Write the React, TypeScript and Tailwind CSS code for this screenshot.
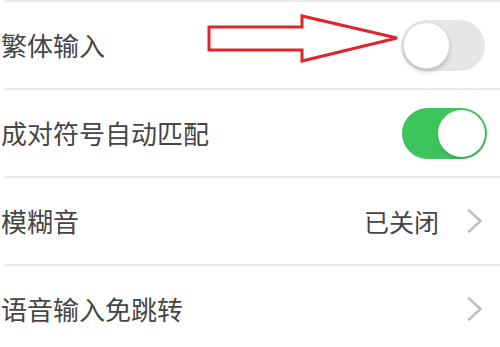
const FONT = {
  fontFamily: '"Noto Sans CJK SC", "Noto Sans", sans-serif',
};

function Chevron() {
  return (
    <svg width="16" height="24" viewBox="0 0 16 24" className="text-[#c0c0c0]">
      <polyline
        points="2,1.5 13.5,12 2,22.5"
        fill="none"
        stroke="currentColor"
        strokeWidth="2.6"
        strokeLinecap="round"
        strokeLinejoin="round"
      />
    </svg>
  );
}

function Toggle({ on }: { on: boolean }) {
  if (on) {
    return (
      <div className="flex h-[51px] w-[85px] items-center justify-end rounded-full bg-[#3ec45c] p-[2px]">
        <div className="h-[47px] w-[47px] rounded-full bg-white shadow-[0_2px_3px_rgba(0,0,0,0.15)]" />
      </div>
    );
  }
  return (
    <div className="flex h-[51px] w-[84px] items-center rounded-full bg-[#e6e6e6] p-[2px]">
      <div className="h-[47px] w-[47px] rounded-full border border-[#dcdcdc] bg-white shadow-[0_3px_4px_rgba(0,0,0,0.18)]" />
    </div>
  );
}

function Divider() {
  return <div className="ml-[4px] h-[2px] bg-[#ebebeb]" />;
}

function Row({
  label,
  children,
}: {
  label: string;
  children?: React.ReactNode;
}) {
  return (
    <div className="flex h-[86px] items-center justify-between pl-[1px]">
      <span className="text-[26px] leading-none text-[#454545]">{label}</span>
      {children}
    </div>
  );
}

export default function App() {
  return (
    <div className="relative h-[347px] w-[500px] overflow-hidden bg-white" style={FONT}>
      <Divider />
      <Row label="繁体输入">
        <div className="mr-[15px]">
          <Toggle on={false} />
        </div>
      </Row>
      <Divider />
      <Row label="成对符号自动匹配">
        <div className="mr-[13px]">
          <Toggle on />
        </div>
      </Row>
      <Divider />
      <Row label="模糊音">
        <div className="mr-[17px] flex items-center gap-[28px]">
          <span className="text-[25px] leading-none text-[#454545]">已关闭</span>
          <Chevron />
        </div>
      </Row>
      <Divider />
      <Row label="语音输入免跳转">
        <div className="mr-[17px]">
          <Chevron />
        </div>
      </Row>

      {/* red pointer arrow */}
      <svg
        className="pointer-events-none absolute left-0 top-0"
        width="500"
        height="100"
        viewBox="0 0 500 100"
      >
        <polygon
          points="209,27 302,27 302,16 397,38 302,61 302,50 209,50"
          fill="none"
          stroke="#e0242c"
          strokeWidth="3"
          strokeLinejoin="miter"
        />
      </svg>
    </div>
  );
}
